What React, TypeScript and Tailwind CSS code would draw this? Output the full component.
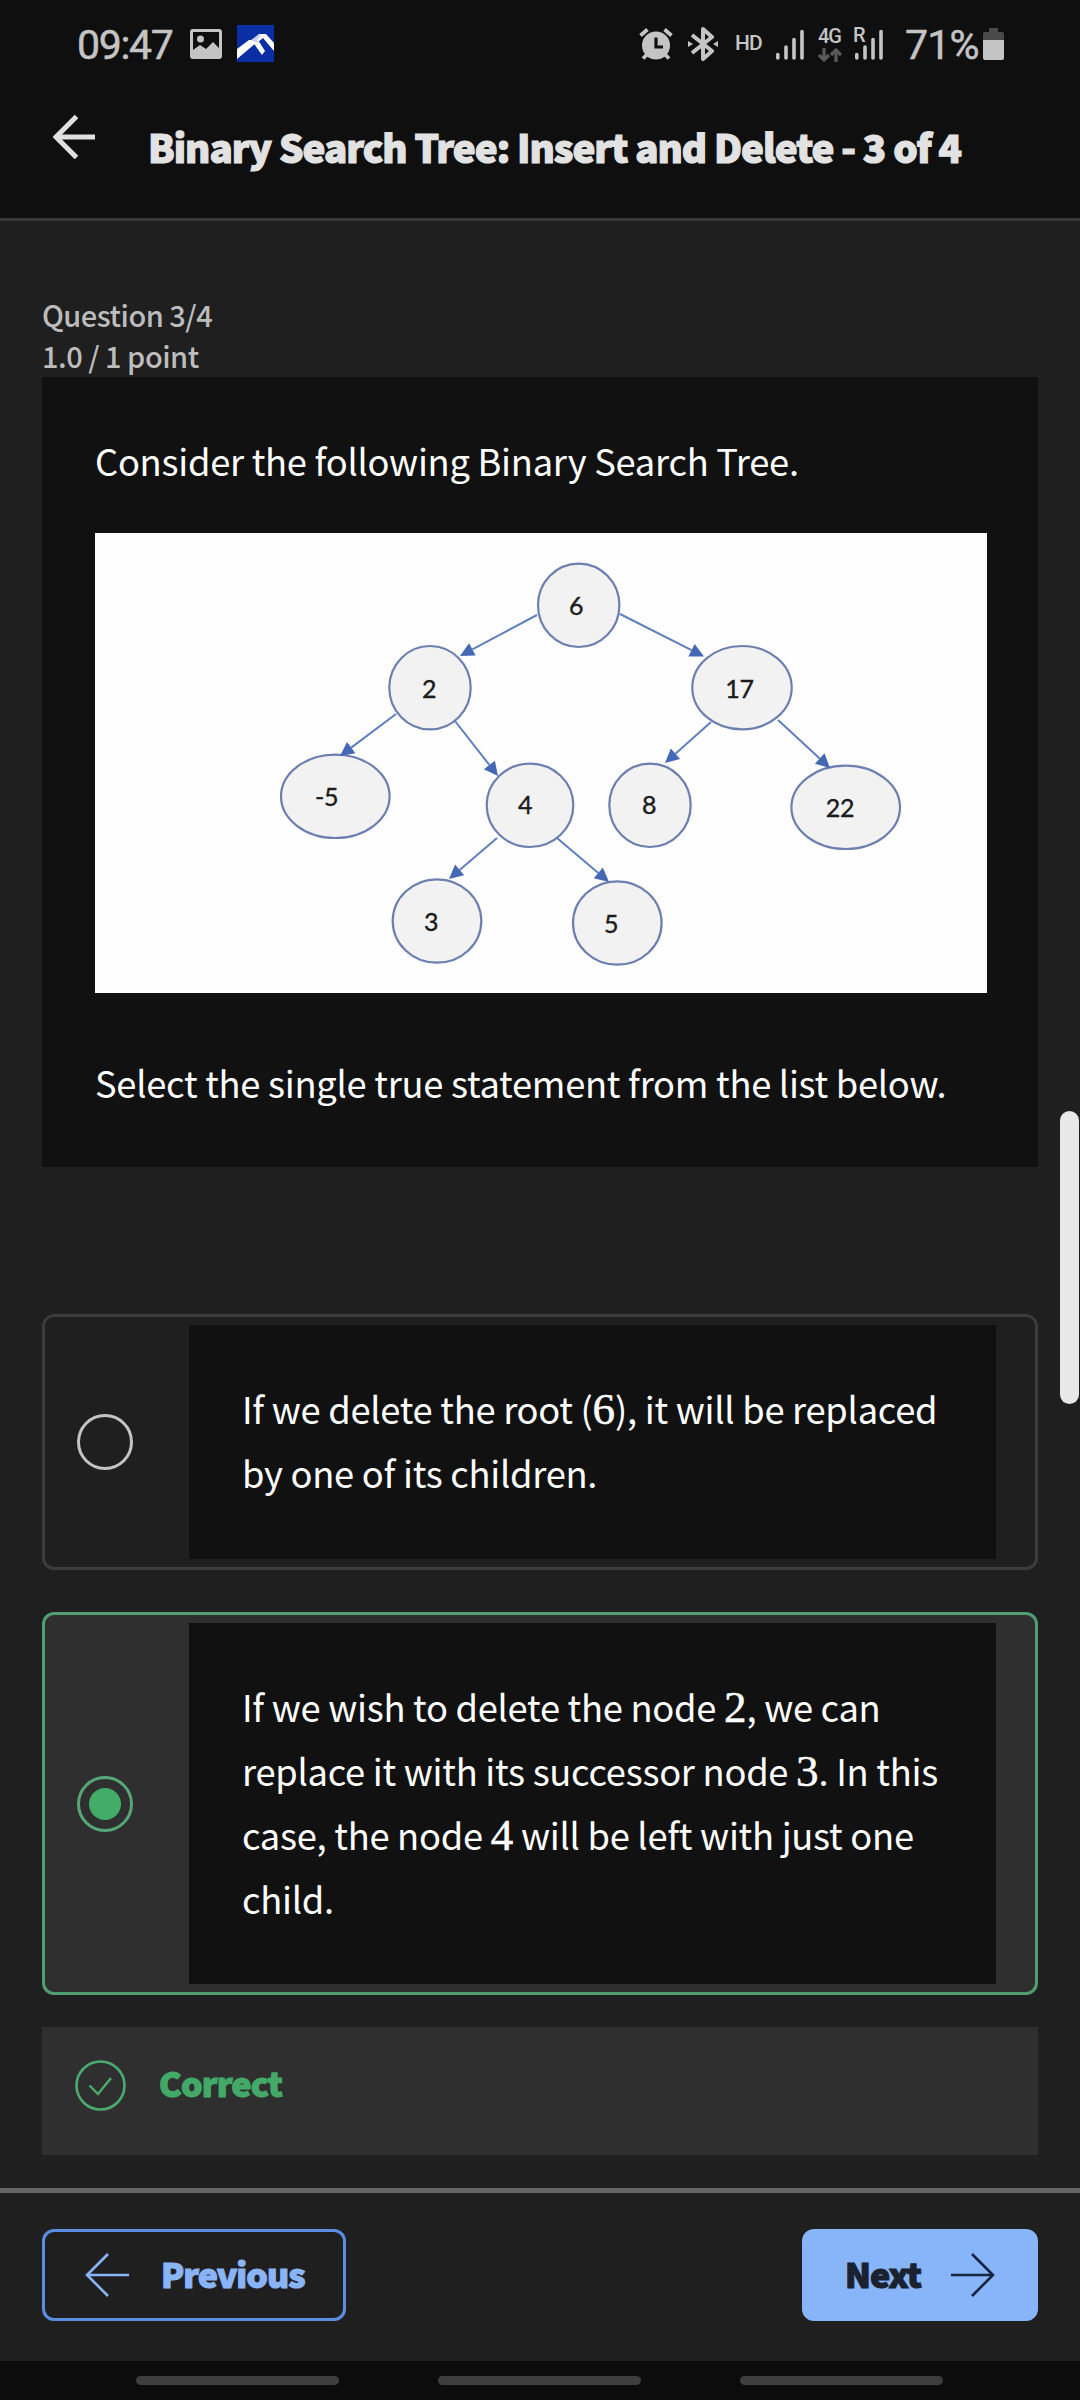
import type { ReactNode } from "react";

const SANS = "font-['Noto_Sans_CJK_JP','Noto_Sans_CJK_SC',sans-serif]";

function StatusBar() {
  return (
    <div className="flex h-[88px] items-start pt-[24px] pl-[77px] text-[#c4c4c4] font-['Roboto',sans-serif]">
      <div className="mt-[1px] w-[113px] text-[41px] leading-[41px] tracking-[-1.3px] whitespace-nowrap [-webkit-text-stroke:0.5px_#c4c4c4]">
        09:47
      </div>
      <svg className="mt-[5px] h-[30px] w-[32px] shrink-0" viewBox="0 0 32 30">
        <path
          fill="#c4c4c4"
          fillRule="evenodd"
          d="M3 0h26a3 3 0 0 1 3 3v24a3 3 0 0 1-3 3H3a3 3 0 0 1-3-3V3a3 3 0 0 1 3-3zM3 3v18l7-5 6 4 7-7 6 6V3zM10.500 6.500a3.500 3.500 0 1 1 0 7 3.500 3.500 0 0 1 0-7z"
        />
      </svg>
      <svg className="mt-[1px] ml-[15px] h-[37px] w-[37px] shrink-0" viewBox="0 0 37 37">
        <path fill="#0a2ea3" d="M0 0h37v37H0z" />
        <path fill="#fff" d="M0 24 12 15h7v3L0 34z" />
        <path fill="#fff" d="M15 15 22 9h7l8 9v8L26 13l-5 4z" />
        <path fill="#fff" d="m15 16 6-1 7 11-3 4z" />
        <path fill="#c3cdec" d="m14 15 7-5h3l-4 5 1 3z" />
      </svg>
      <svg className="mt-[4px] ml-[365px] h-[32px] w-[34px] shrink-0" viewBox="0 0 34 32">
        <path
          d="m1.500 7.500 7-6M32.500 7.500l-7-6M4 30.500l5-5M30 30.500l-5-5"
          stroke="#c4c4c4"
          strokeWidth="3.800"
          fill="none"
        />
        <circle cx="17" cy="17.500" r="14" fill="#c4c4c4" />
        <path d="M17 9.500v9.500h7" fill="none" stroke="#0f0f0f" strokeWidth="3.200" />
      </svg>
      <svg className="mt-[3px] ml-[15px] h-[34px] w-[30px] shrink-0" viewBox="0 0 30 34">
        <path
          d="m4 8 20 16-9 8V2l9 8L4 26"
          fill="none"
          stroke="#c4c4c4"
          strokeWidth="4"
          strokeLinejoin="round"
        />
        <path fill="#c4c4c4" d="m0 14 5 3-5 3zM30 14l-5 3 5 3z" />
      </svg>
      <div className="mt-[9px] ml-[17px] w-[41px] text-[21px] leading-[21px] font-medium tracking-[-1px]">HD</div>
      <SignalBars />
      <div className="ml-[14px] flex w-[37px] flex-col">
        <span className="mt-[2px] h-[21px] text-[20px] leading-[20px] font-medium tracking-[-1px]">4G</span>
        <svg className="mt-[1px] h-[14px] w-[24px]" viewBox="0 0 24 14">
          <path d="M6 0v12M1 7l5 5 5-5M18 14V2M13 7l5-5 5 5" fill="none" stroke="#5a5a5a" strokeWidth="3.200" />
        </svg>
      </div>
      <div className="relative">
        <span className="absolute top-[1px] -left-[2px] text-[20px] leading-[20px] font-medium">R</span>
        <SignalBars />
      </div>
      <div className="mt-[1px] ml-[22px] w-[78px] text-[41px] leading-[41px] tracking-[-0.8px] whitespace-nowrap [-webkit-text-stroke:0.5px_#c4c4c4]">
        71%
      </div>
      <svg className="mt-[4px] h-[32px] w-[21px] shrink-0" viewBox="0 0 21 32">
        <path fill="#4a4a4a" d="M6 0h9v4h4a2 2 0 0 1 2 2v7H0V6a2 2 0 0 1 2-2h4z" />
        <path fill="#c4c4c4" d="M0 12h21v18a2 2 0 0 1-2 2H2a2 2 0 0 1-2-2z" />
      </svg>
    </div>
  );
}

function SignalBars() {
  return (
    <svg className="mt-[5px] h-[31px] w-[28px] shrink-0" viewBox="0 0 28 31">
      <path
        d="M1.800 25.500v3.500M10 18v11M18 10.500v18.500M26 2.500v26.500"
        stroke="#c4c4c4"
        strokeWidth="3.600"
        strokeLinecap="round"
      />
    </svg>
  );
}

function Header() {
  return (
    <header className="flex h-[133px] items-start border-b-3 border-[#383838] pl-[53px]">
      <svg className="mt-[27px] h-[44px] w-[42px] shrink-0" viewBox="0 0 42 44">
        <path d="M42 22H3M23.500 1.500 3 22l20.500 20.500" fill="none" stroke="#e0e0e0" strokeWidth="5" />
      </svg>
      <h1 className="mt-[28px] ml-[53px] text-[38.500px] leading-[60px] font-black tracking-[-1px] whitespace-nowrap text-[#e2e2e2] [-webkit-text-stroke:1.2px_#e2e2e2]">
        Binary Search Tree: Insert and Delete - 3 of 4
      </h1>
    </header>
  );
}

type TreeNode = { label: string; cx: number; cy: number; rx: number; tx: number; ty: number };

const nodes: TreeNode[] = [
  { label: "6", cx: 578.700, cy: 605.300, rx: 40.700, tx: 576, ty: 614.500 },
  { label: "2", cx: 430, cy: 687.700, rx: 40.700, tx: 429, ty: 697.500 },
  { label: "17", cx: 742, cy: 687.700, rx: 49.700, tx: 739.500, ty: 697.500 },
  { label: "-5", cx: 335.300, cy: 796.300, rx: 54.300, tx: 326.700, ty: 806 },
  { label: "4", cx: 530, cy: 805.300, rx: 43.300, tx: 525, ty: 813.500 },
  { label: "8", cx: 650, cy: 805.300, rx: 40.700, tx: 649, ty: 813.500 },
  { label: "22", cx: 845.700, cy: 807.300, rx: 54.300, tx: 840, ty: 817 },
  { label: "3", cx: 437, cy: 921, rx: 44.300, tx: 431, ty: 930.500 },
  { label: "5", cx: 617.300, cy: 923, rx: 44.300, tx: 611, ty: 932.500 },
];

const edges = [
  [537, 615, 460, 656],
  [620, 614, 704, 656.5],
  [396, 714, 340, 756],
  [455, 721, 498, 776],
  [711, 722, 665, 763],
  [778, 720, 830, 768],
  [497, 838, 449, 879],
  [557, 838, 609, 882],
];

function Edge({ x1, y1, x2, y2 }: { x1: number; y1: number; x2: number; y2: number }) {
  const len = Math.hypot(x2 - x1, y2 - y1);
  const ux = (x2 - x1) / len;
  const uy = (y2 - y1) / len;
  const bx = x2 - ux * 14;
  const by = y2 - uy * 14;
  return (
    <g>
      <line x1={x1} y1={y1} x2={bx} y2={by} stroke="#5f7fbd" strokeWidth="2" />
      <polygon
        fill="#4468b4"
        points={`${x2},${y2} ${bx - uy * 7},${by + ux * 7} ${bx + uy * 7},${by - ux * 7}`}
      />
    </g>
  );
}

function TreeDiagram() {
  return (
    <svg className="mt-[54px] block h-[460px] w-[892px] bg-[#fefefe]" viewBox="95 533 892 460">
      {nodes.map((n) => (
        <g key={n.label}>
          <ellipse cx={n.cx} cy={n.cy} rx={n.rx} ry={41.7} fill="#f2f2f2" stroke="#6d7fae" strokeWidth="2.200" />
          <text
            x={n.tx}
            y={n.ty}
            textAnchor="middle"
            fill="#1c1c1c"
            stroke="#1c1c1c"
            strokeWidth="0.400"
            className="font-['Lato',sans-serif] text-[25px]"
          >
            {n.label}
          </text>
        </g>
      ))}
      {edges.map(([x1, y1, x2, y2]) => (
        <Edge key={`${x1}-${y1}`} x1={x1} y1={y1} x2={x2} y2={y2} />
      ))}
    </svg>
  );
}

function MathNum({ children }: { children: ReactNode }) {
  return (
    <span className="font-['Liberation_Serif',serif] text-[45px] leading-[0] tracking-normal [-webkit-text-stroke:0.5px_#fff]">
      {children}
    </span>
  );
}

function Option({ selected, children }: { selected?: boolean; children: ReactNode }) {
  return (
    <div
      className={
        selected
          ? "mt-[42px] flex h-[383px] items-center rounded-[12px] border-3 border-[#519f70] bg-[#2f2f2f] pl-[32px]"
          : "mt-[147px] flex h-[256px] items-center rounded-[12px] border-3 border-[#3c3c3c] pl-[32px]"
      }
    >
      <div
        className={
          selected
            ? "flex size-[56px] items-center justify-center rounded-full border-3 border-[#55a777]"
            : "size-[56px] rounded-full border-3 border-[#c4c4c4]"
        }
      >
        {selected && <div className="size-[32px] rounded-full bg-[#43ad68]" />}
      </div>
      <div className="my-[8px] ml-[56px] w-[807px] self-stretch bg-[#111] pt-[51px] pl-[53px] text-[36.300px] leading-[64px] tracking-[-0.27px] whitespace-nowrap text-white">
        {children}
      </div>
    </div>
  );
}

export default function App() {
  return (
    <div className={`relative h-[2400px] w-[1080px] overflow-hidden bg-[#1f1f1f] ${SANS}`}>
      <div className="bg-[#0f0f0f]">
        <StatusBar />
        <Header />
      </div>

      <main className="h-[1967px] px-[42px] pt-[73px]">
        <div className="h-[83px] text-[29px] leading-[41px] font-medium tracking-[-0.5px] whitespace-nowrap text-[#bcbcbc]">
          <p>Question 3/4</p>
          <p>1.0 / 1 point</p>
        </div>
        <section className="h-[790px] bg-[#111] pt-[51px] pl-[53px] text-[36.300px] leading-[64px] tracking-[-0.27px] whitespace-nowrap text-white">
          <p className="h-[51px]">Consider the following Binary Search Tree.</p>
          <TreeDiagram />
          <p className="mt-[57px]">Select the single true statement from the list below.</p>
        </section>

        <Option>
          <p>
            If we delete the root (<MathNum>6</MathNum>), it will be replaced
          </p>
          <p>by one of its children.</p>
        </Option>
        <Option selected>
          <p>
            If we wish to delete the node <MathNum>2</MathNum>, we can
          </p>
          <p>
            replace it with its successor node <MathNum>3</MathNum>. In this
          </p>
          <p>
            case, the node <MathNum>4</MathNum> will be left with just one
          </p>
          <p>child.</p>
        </Option>

        <div className="mt-[32px] flex h-[128px] items-start bg-[#2f2f2f] pl-[33px]">
          <svg className="mt-[33px] h-[51px] w-[51px]" viewBox="0 0 51 51" fill="none" stroke="#4caa70">
            <circle cx="25.500" cy="25.500" r="24" strokeWidth="2.600" />
            <path d="m14.500 25.500 8.500 8.500 13-16" strokeWidth="2.400" />
          </svg>
          <span className="mt-[26px] ml-[33px] text-[34px] leading-[60px] font-black tracking-[-0.8px] text-[#43a968] [-webkit-text-stroke:1.2px_#43a968]">
            Correct
          </span>
        </div>
      </main>

      <footer className="flex h-[173px] items-start justify-between border-t-5 border-[#666] px-[42px] pt-[36px]">
        <button className="flex h-[92px] w-[304px] items-center rounded-[12px] border-3 border-[#5b8de0] pl-[40px] text-[#8ab4f8]">
          <svg className="h-[44px] w-[44px]" viewBox="0 0 44 44">
            <path d="M44 22H2M23 1 2 22l21 21" fill="none" stroke="currentColor" strokeWidth="2.600" />
          </svg>
          <span className="-mt-[2px] ml-[32px] text-[34px] leading-[60px] font-black tracking-[-1px] [-webkit-text-stroke:1.2px_#8ab4f8]">
            Previous
          </span>
        </button>
        <button className="flex h-[92px] w-[236px] items-center rounded-[12px] bg-[#88b4f9] pl-[43px] text-[#1a2230]">
          <span className="-mt-[2px] w-[106px] text-left text-[34px] leading-[60px] font-black tracking-[-1px] [-webkit-text-stroke:1.2px_#1a2230]">
            Next
          </span>
          <svg className="h-[44px] w-[44px]" viewBox="0 0 44 44">
            <path d="M0 22h42M21 1l21 21-21 21" fill="none" stroke="#15253f" strokeWidth="2.600" />
          </svg>
        </button>
      </footer>

      <nav className="flex h-[39px] items-start gap-[99px] bg-[#0c0c0c] pt-[15px] pl-[136px]">
        <div className="h-[9px] w-[203px] rounded-full bg-[#3e3e3e]" />
        <div className="h-[9px] w-[203px] rounded-full bg-[#3e3e3e]" />
        <div className="h-[9px] w-[203px] rounded-full bg-[#3e3e3e]" />
      </nav>

      <div className="absolute top-[1111px] left-[1060px] h-[293px] w-[19px] rounded-full bg-[#e8e8e8]" />
    </div>
  );
}
